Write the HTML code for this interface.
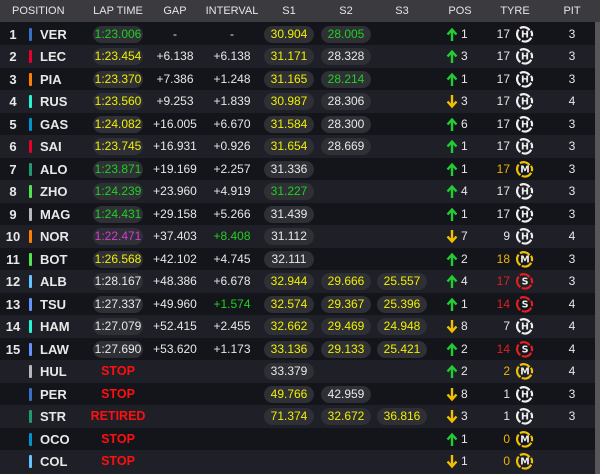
<!DOCTYPE html>
<html><head><meta charset="utf-8"><style>
*{margin:0;padding:0;box-sizing:border-box}
body{width:600px;height:474px;background:#15151c;overflow:hidden;font-family:"Liberation Sans",sans-serif;color:#e8e8e8;font-size:12px;position:relative}
.hd{position:absolute;left:0;top:0;width:600px;height:22px;background:#3a3a3f;font-size:11px;color:#e6e6e6}
.hd span{position:absolute;top:5px;text-align:center}
.r{position:absolute;left:0;width:595px;height:22.5px}
.r.o{background:#14141b}.r.e{background:#1f1f27}
.r span{position:absolute;top:5px;line-height:13px;text-align:center}
.n{left:0;width:26px;font-weight:bold;font-size:13px}
.b{left:29px;width:3px;height:13px;top:5px!important;border-radius:1px}
.nm{left:40px;font-weight:bold;font-size:13px;text-align:left!important}
.p{height:17px!important;top:3px!important;line-height:17px!important;background:#2f2f36;border-radius:9px;width:50px}
.lt{left:93px}.s1{left:264px}.s2{left:321px}.s3{left:377px}
.gp{left:147px;width:56px}.iv{left:204px;width:56px}
.st{left:88px;width:60px;color:#ff1010;font-weight:bold;font-size:12.5px}
.ar{left:446px;width:12px;top:4px!important}
.pn{left:461px;width:12px;text-align:left!important}
.tn{left:486px;width:24px;text-align:right!important}
.ti{left:516px;width:18px;top:2px!important}
.pt{left:562px;width:20px}
.y{color:#f0f000}.g{color:#1fd11f}.pu{color:#d63cd6}.w{color:#e8e8e8}.rd{color:#e02020}.ty{color:#f0b400}
.sb{position:absolute;left:595px;top:22px;width:5px;height:452px;background:#56565b}
</style></head><body>
<svg width="0" height="0" style="position:absolute"><defs>
<g id="u"><path d="M6 14V3M1.5 7.5L6 2.5L10.5 7.5" fill="none" stroke="#22cc33" stroke-width="2.4"/></g>
<g id="d"><path d="M6 1V12M1.5 7.5L6 12.5L10.5 7.5" fill="none" stroke="#f0c000" stroke-width="2.4"/></g>
<g id="rg"><path d="M13.5 5.2A7 7 0 0 0 4 3.2M2.7 4.6A7 7 0 0 0 4.5 15.1M5.8 15.8A7 7 0 0 0 15.2 12.6M15.8 11.2A7 7 0 0 0 15 5.8" fill="none" stroke-width="2.2"/></g>
</defs></svg>
<div class="hd">
<span style="left:12px;text-align:left">POSITION</span>
<span style="left:88px;width:60px">LAP TIME</span>
<span style="left:150px;width:50px">GAP</span>
<span style="left:200px;width:64px">INTERVAL</span>
<span style="left:264px;width:50px">S1</span>
<span style="left:321px;width:50px">S2</span>
<span style="left:377px;width:50px">S3</span>
<span style="left:440px;width:40px">POS</span>
<span style="left:495px;width:40px">TYRE</span>
<span style="left:562px;width:20px">PIT</span>
</div>

<div class="r o" style="top:22.5px"><span class="n">1</span><span class="b" style="background:#3671c6"></span><span class="nm">VER</span><span class="p lt g">1:23.006</span><span class="gp">-</span><span class="iv">-</span><span class="p s1 y">30.904</span><span class="p s2 g">28.005</span><span class="ar"><svg width="12" height="15"><use href="#u"/></svg></span><span class="pn">1</span><span class="tn">17</span><span class="ti"><svg width="18" height="18"><use href="#rg" stroke="#eee"/><text x="9" y="12.6" font-size="9.5" font-weight="bold" fill="#eee" text-anchor="middle" font-family="DejaVu Sans">H</text></svg></span><span class="pt">3</span></div>
<div class="r e" style="top:45px"><span class="n">2</span><span class="b" style="background:#e8002d"></span><span class="nm">LEC</span><span class="p lt y">1:23.454</span><span class="gp">+6.138</span><span class="iv">+6.138</span><span class="p s1 y">31.171</span><span class="p s2 w">28.328</span><span class="ar"><svg width="12" height="15"><use href="#u"/></svg></span><span class="pn">3</span><span class="tn">17</span><span class="ti"><svg width="18" height="18"><use href="#rg" stroke="#eee"/><text x="9" y="12.6" font-size="9.5" font-weight="bold" fill="#eee" text-anchor="middle" font-family="DejaVu Sans">H</text></svg></span><span class="pt">3</span></div>
<div class="r o" style="top:67.5px"><span class="n">3</span><span class="b" style="background:#ff8000"></span><span class="nm">PIA</span><span class="p lt y">1:23.370</span><span class="gp">+7.386</span><span class="iv">+1.248</span><span class="p s1 y">31.165</span><span class="p s2 g">28.214</span><span class="ar"><svg width="12" height="15"><use href="#u"/></svg></span><span class="pn">1</span><span class="tn">17</span><span class="ti"><svg width="18" height="18"><use href="#rg" stroke="#eee"/><text x="9" y="12.6" font-size="9.5" font-weight="bold" fill="#eee" text-anchor="middle" font-family="DejaVu Sans">H</text></svg></span><span class="pt">3</span></div>
<div class="r e" style="top:90px"><span class="n">4</span><span class="b" style="background:#27f4d2"></span><span class="nm">RUS</span><span class="p lt y">1:23.560</span><span class="gp">+9.253</span><span class="iv">+1.839</span><span class="p s1 y">30.987</span><span class="p s2 w">28.306</span><span class="ar"><svg width="12" height="15"><use href="#d"/></svg></span><span class="pn">3</span><span class="tn">17</span><span class="ti"><svg width="18" height="18"><use href="#rg" stroke="#eee"/><text x="9" y="12.6" font-size="9.5" font-weight="bold" fill="#eee" text-anchor="middle" font-family="DejaVu Sans">H</text></svg></span><span class="pt">4</span></div>
<div class="r o" style="top:112.5px"><span class="n">5</span><span class="b" style="background:#0093cc"></span><span class="nm">GAS</span><span class="p lt y">1:24.082</span><span class="gp">+16.005</span><span class="iv">+6.670</span><span class="p s1 y">31.584</span><span class="p s2 w">28.300</span><span class="ar"><svg width="12" height="15"><use href="#u"/></svg></span><span class="pn">6</span><span class="tn">17</span><span class="ti"><svg width="18" height="18"><use href="#rg" stroke="#eee"/><text x="9" y="12.6" font-size="9.5" font-weight="bold" fill="#eee" text-anchor="middle" font-family="DejaVu Sans">H</text></svg></span><span class="pt">3</span></div>
<div class="r e" style="top:135px"><span class="n">6</span><span class="b" style="background:#e8002d"></span><span class="nm">SAI</span><span class="p lt y">1:23.745</span><span class="gp">+16.931</span><span class="iv">+0.926</span><span class="p s1 y">31.654</span><span class="p s2 w">28.669</span><span class="ar"><svg width="12" height="15"><use href="#u"/></svg></span><span class="pn">1</span><span class="tn">17</span><span class="ti"><svg width="18" height="18"><use href="#rg" stroke="#eee"/><text x="9" y="12.6" font-size="9.5" font-weight="bold" fill="#eee" text-anchor="middle" font-family="DejaVu Sans">H</text></svg></span><span class="pt">3</span></div>
<div class="r o" style="top:157.5px"><span class="n">7</span><span class="b" style="background:#229971"></span><span class="nm">ALO</span><span class="p lt g">1:23.871</span><span class="gp">+19.169</span><span class="iv">+2.257</span><span class="p s1 w">31.336</span><span class="ar"><svg width="12" height="15"><use href="#u"/></svg></span><span class="pn">1</span><span class="tn ty">17</span><span class="ti"><svg width="18" height="18"><use href="#rg" stroke="#f0c000"/><text x="9" y="12.6" font-size="9.5" font-weight="bold" fill="#eee" text-anchor="middle" font-family="DejaVu Sans">M</text></svg></span><span class="pt">3</span></div>
<div class="r e" style="top:180px"><span class="n">8</span><span class="b" style="background:#52e252"></span><span class="nm">ZHO</span><span class="p lt g">1:24.239</span><span class="gp">+23.960</span><span class="iv">+4.919</span><span class="p s1 g">31.227</span><span class="ar"><svg width="12" height="15"><use href="#u"/></svg></span><span class="pn">4</span><span class="tn">17</span><span class="ti"><svg width="18" height="18"><use href="#rg" stroke="#eee"/><text x="9" y="12.6" font-size="9.5" font-weight="bold" fill="#eee" text-anchor="middle" font-family="DejaVu Sans">H</text></svg></span><span class="pt">3</span></div>
<div class="r o" style="top:202.5px"><span class="n">9</span><span class="b" style="background:#b6babd"></span><span class="nm">MAG</span><span class="p lt g">1:24.431</span><span class="gp">+29.158</span><span class="iv">+5.266</span><span class="p s1 w">31.439</span><span class="ar"><svg width="12" height="15"><use href="#u"/></svg></span><span class="pn">1</span><span class="tn">17</span><span class="ti"><svg width="18" height="18"><use href="#rg" stroke="#eee"/><text x="9" y="12.6" font-size="9.5" font-weight="bold" fill="#eee" text-anchor="middle" font-family="DejaVu Sans">H</text></svg></span><span class="pt">3</span></div>
<div class="r e" style="top:225px"><span class="n">10</span><span class="b" style="background:#ff8000"></span><span class="nm">NOR</span><span class="p lt pu">1:22.471</span><span class="gp">+37.403</span><span class="iv g">+8.408</span><span class="p s1 w">31.112</span><span class="ar"><svg width="12" height="15"><use href="#d"/></svg></span><span class="pn">7</span><span class="tn">9</span><span class="ti"><svg width="18" height="18"><use href="#rg" stroke="#eee"/><text x="9" y="12.6" font-size="9.5" font-weight="bold" fill="#eee" text-anchor="middle" font-family="DejaVu Sans">H</text></svg></span><span class="pt">4</span></div>
<div class="r o" style="top:247.5px"><span class="n">11</span><span class="b" style="background:#52e252"></span><span class="nm">BOT</span><span class="p lt y">1:26.568</span><span class="gp">+42.102</span><span class="iv">+4.745</span><span class="p s1 w">32.111</span><span class="ar"><svg width="12" height="15"><use href="#u"/></svg></span><span class="pn">2</span><span class="tn ty">18</span><span class="ti"><svg width="18" height="18"><use href="#rg" stroke="#f0c000"/><text x="9" y="12.6" font-size="9.5" font-weight="bold" fill="#eee" text-anchor="middle" font-family="DejaVu Sans">M</text></svg></span><span class="pt">3</span></div>
<div class="r e" style="top:270px"><span class="n">12</span><span class="b" style="background:#64c4ff"></span><span class="nm">ALB</span><span class="p lt w">1:28.167</span><span class="gp">+48.386</span><span class="iv">+6.678</span><span class="p s1 y">32.944</span><span class="p s2 y">29.666</span><span class="p s3 y">25.557</span><span class="ar"><svg width="12" height="15"><use href="#u"/></svg></span><span class="pn">4</span><span class="tn rd">17</span><span class="ti"><svg width="18" height="18"><use href="#rg" stroke="#e02020"/><text x="9" y="12.6" font-size="9.5" font-weight="bold" fill="#eee" text-anchor="middle" font-family="DejaVu Sans">S</text></svg></span><span class="pt">3</span></div>
<div class="r o" style="top:292.5px"><span class="n">13</span><span class="b" style="background:#6692ff"></span><span class="nm">TSU</span><span class="p lt w">1:27.337</span><span class="gp">+49.960</span><span class="iv g">+1.574</span><span class="p s1 y">32.574</span><span class="p s2 y">29.367</span><span class="p s3 y">25.396</span><span class="ar"><svg width="12" height="15"><use href="#u"/></svg></span><span class="pn">1</span><span class="tn rd">14</span><span class="ti"><svg width="18" height="18"><use href="#rg" stroke="#e02020"/><text x="9" y="12.6" font-size="9.5" font-weight="bold" fill="#eee" text-anchor="middle" font-family="DejaVu Sans">S</text></svg></span><span class="pt">4</span></div>
<div class="r e" style="top:315px"><span class="n">14</span><span class="b" style="background:#27f4d2"></span><span class="nm">HAM</span><span class="p lt w">1:27.079</span><span class="gp">+52.415</span><span class="iv">+2.455</span><span class="p s1 y">32.662</span><span class="p s2 y">29.469</span><span class="p s3 y">24.948</span><span class="ar"><svg width="12" height="15"><use href="#d"/></svg></span><span class="pn">8</span><span class="tn">7</span><span class="ti"><svg width="18" height="18"><use href="#rg" stroke="#eee"/><text x="9" y="12.6" font-size="9.5" font-weight="bold" fill="#eee" text-anchor="middle" font-family="DejaVu Sans">H</text></svg></span><span class="pt">4</span></div>
<div class="r o" style="top:337.5px"><span class="n">15</span><span class="b" style="background:#6692ff"></span><span class="nm">LAW</span><span class="p lt w">1:27.690</span><span class="gp">+53.620</span><span class="iv">+1.173</span><span class="p s1 y">33.136</span><span class="p s2 y">29.133</span><span class="p s3 y">25.421</span><span class="ar"><svg width="12" height="15"><use href="#u"/></svg></span><span class="pn">2</span><span class="tn rd">14</span><span class="ti"><svg width="18" height="18"><use href="#rg" stroke="#e02020"/><text x="9" y="12.6" font-size="9.5" font-weight="bold" fill="#eee" text-anchor="middle" font-family="DejaVu Sans">S</text></svg></span><span class="pt">4</span></div>
<div class="r e" style="top:360px"><span class="b" style="background:#b6babd"></span><span class="nm">HUL</span><span class="st">STOP</span><span class="p s1 w">33.379</span><span class="ar"><svg width="12" height="15"><use href="#u"/></svg></span><span class="pn">2</span><span class="tn ty">2</span><span class="ti"><svg width="18" height="18"><use href="#rg" stroke="#f0c000"/><text x="9" y="12.6" font-size="9.5" font-weight="bold" fill="#eee" text-anchor="middle" font-family="DejaVu Sans">M</text></svg></span><span class="pt">4</span></div>
<div class="r o" style="top:382.5px"><span class="b" style="background:#3671c6"></span><span class="nm">PER</span><span class="st">STOP</span><span class="p s1 y">49.766</span><span class="p s2 w">42.959</span><span class="ar"><svg width="12" height="15"><use href="#d"/></svg></span><span class="pn">8</span><span class="tn">1</span><span class="ti"><svg width="18" height="18"><use href="#rg" stroke="#eee"/><text x="9" y="12.6" font-size="9.5" font-weight="bold" fill="#eee" text-anchor="middle" font-family="DejaVu Sans">H</text></svg></span><span class="pt">3</span></div>
<div class="r e" style="top:405px"><span class="b" style="background:#229971"></span><span class="nm">STR</span><span class="st" style="left:83px;width:70px">RETIRED</span><span class="p s1 y">71.374</span><span class="p s2 y">32.672</span><span class="p s3 y">36.816</span><span class="ar"><svg width="12" height="15"><use href="#d"/></svg></span><span class="pn">3</span><span class="tn">1</span><span class="ti"><svg width="18" height="18"><use href="#rg" stroke="#eee"/><text x="9" y="12.6" font-size="9.5" font-weight="bold" fill="#eee" text-anchor="middle" font-family="DejaVu Sans">H</text></svg></span><span class="pt">3</span></div>
<div class="r o" style="top:427.5px"><span class="b" style="background:#0093cc"></span><span class="nm">OCO</span><span class="st">STOP</span><span class="ar"><svg width="12" height="15"><use href="#u"/></svg></span><span class="pn">1</span><span class="tn ty">0</span><span class="ti"><svg width="18" height="18"><use href="#rg" stroke="#f0c000"/><text x="9" y="12.6" font-size="9.5" font-weight="bold" fill="#eee" text-anchor="middle" font-family="DejaVu Sans">M</text></svg></span></div>
<div class="r e" style="top:450px;height:24px"><span class="b" style="background:#64c4ff"></span><span class="nm">COL</span><span class="st">STOP</span><span class="ar"><svg width="12" height="15"><use href="#d"/></svg></span><span class="pn">1</span><span class="tn ty">0</span><span class="ti"><svg width="18" height="18"><use href="#rg" stroke="#f0c000"/><text x="9" y="12.6" font-size="9.5" font-weight="bold" fill="#eee" text-anchor="middle" font-family="DejaVu Sans">M</text></svg></span></div>
<div class="sb"></div>
</body></html>
